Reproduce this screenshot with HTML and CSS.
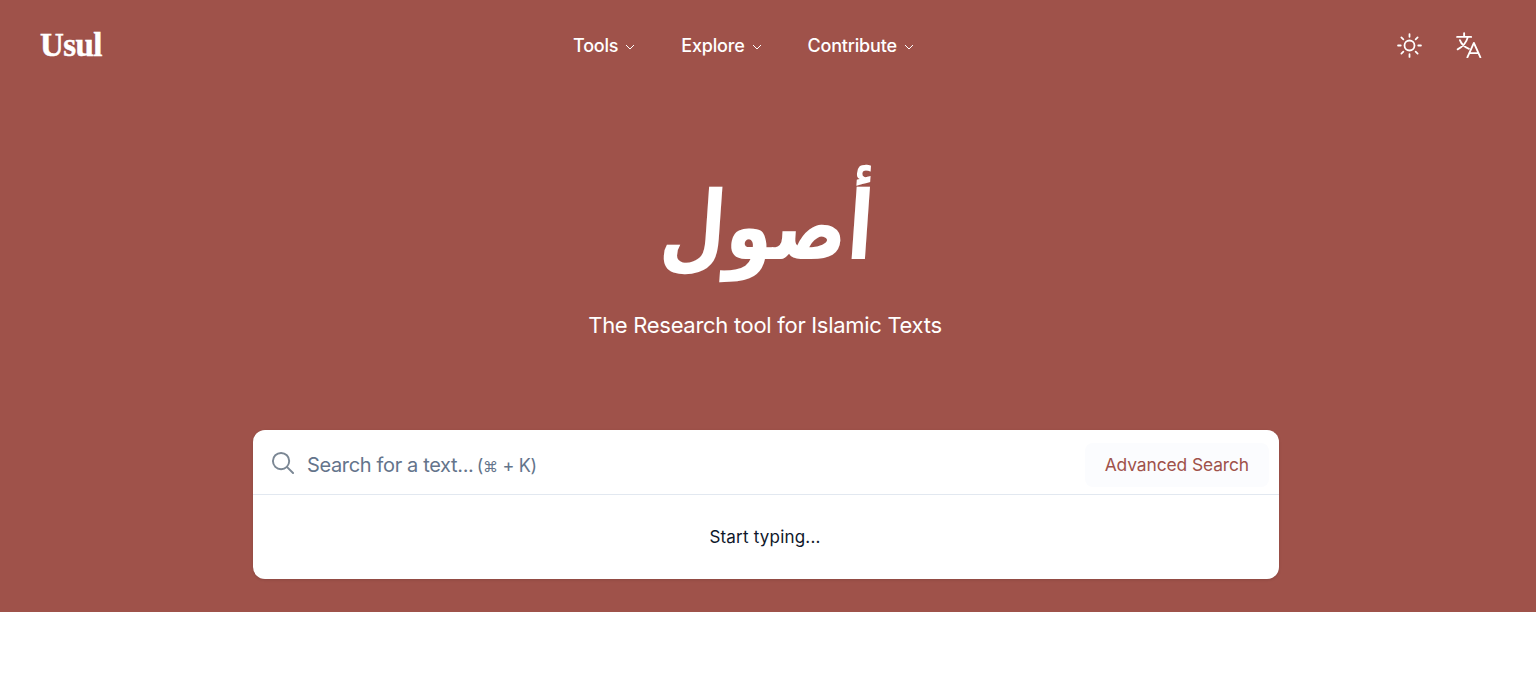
FILE: index.html
```html
<!DOCTYPE html>
<html lang="en">
<head>
  <meta charset="UTF-8" />
  <title>Usul</title>
  <meta name="viewport" content="width=device-width, initial-scale=1.0" />
  <link rel="stylesheet" href="styles.css">
</head>
<body>
  <section class="hero">
    <header class="topbar">
      <a class="logo">Usul</a>
      <nav class="menu">
        <a class="menu-item">Tools
          <svg class="chevron" viewBox="0 0 10 6"><path d="M1 1l4 4 4-4"/></svg>
        </a>
        <a class="menu-item">Explore
          <svg class="chevron" viewBox="0 0 10 6"><path d="M1 1l4 4 4-4"/></svg>
        </a>
        <a class="menu-item">Contribute
          <svg class="chevron" viewBox="0 0 10 6"><path d="M1 1l4 4 4-4"/></svg>
        </a>
      </nav>
      <div class="actions">
        <svg class="icon" viewBox="0 0 24 24">
          <circle cx="12" cy="12" r="4.8"/>
          <path d="M12 1v2.6M12 20.400V23M1 12h2.600M20.400 12H23M4.200 4.200l1.900 1.900M17.900 17.900l1.900 1.900M4.200 19.800l1.900-1.900M17.900 6.100l1.900-1.900"/>
        </svg>
        <svg class="icon icon-lang" viewBox="0 0 24 24">
          <path d="M1 4.500h13M7.500 1v3.500M11 4.500c-1.300 5-4.600 9-9.500 11.500M3.600 7.500c1.400 3.600 4.200 6.400 8.400 8"/>
          <path d="M10.500 23.500l6-13.500 6 13.500M12.400 19.500h8.200"/>
        </svg>
      </div>
    </header>

    <div class="title-block">
      <h1 class="title" lang="ar" dir="rtl">أصول</h1>
      <p class="tagline">The Research tool for Islamic Texts</p>
    </div>

    <div class="search-card">
      <div class="search-row">
        <svg class="search-icon" viewBox="0 0 24 24"><circle cx="10.500" cy="10.500" r="8.500"/><path d="M16.800 16.800L23 23"/></svg>
        <span class="search-text">Search for a text... <span class="search-hint">(<span class="cmd">⌘</span> + K)</span></span>
        <a class="advanced">Advanced Search</a>
      </div>
      <div class="search-empty">Start typing...</div>
    </div>
  </section>
</body>
</html>
```

FILE: styles.css
```css
* {
  box-sizing: border-box;
}

body {
  margin: 0;
  background: #fff;
  font-family: Inter, "Noto Sans", sans-serif;
  color: #0f172a;
}

.hero {
  height: 612px;
  background: #9f524a;
  display: flex;
  flex-direction: column;
}

.topbar {
  height: 90px;
  padding: 0 54px 0 40px;
  display: flex;
  justify-content: space-between;
  align-items: center;
}

.logo {
  font-family: "Liberation Serif", serif;
  font-weight: 700;
  font-size: 33px;
  letter-spacing: -0.6px;
  -webkit-text-stroke: 0.5px #fff;
  color: #fff;
}

.menu {
  display: flex;
  gap: 46px;
  margin-left: -12px;
}

.menu-item {
  display: flex;
  align-items: center;
  gap: 7px;
  font-size: 18px;
  font-weight: 500;
  letter-spacing: -0.2px;
  color: #fff;
}

.chevron {
  width: 10px;
  height: 6px;
  margin-top: 3px;
  fill: none;
  stroke: #fff;
  stroke-width: 1;
}

.actions {
  display: flex;
  justify-content: flex-end;
  align-items: center;
  gap: 34px;
}

.icon {
  width: 25px;
  height: 25px;
  fill: none;
  stroke: #fff;
  stroke-width: 1.7;
  stroke-linecap: round;
  stroke-linejoin: round;
}

.icon-lang {
  width: 26px;
  height: 26px;
}

.title-block {
  text-align: center;
  padding: 71px 6px 0 0;
  color: #fff;
}

.title {
  margin: 0;
  font-family: "DejaVu Sans", sans-serif;
  font-size: 95px;
  font-weight: 700;
  line-height: 130px;
  color: #fff;
  transform: translateX(2px) scaleX(0.8) skewX(-5deg);
}

.tagline {
  margin: 19px 0 0;
  font-size: 22px;
  line-height: 30px;
  letter-spacing: -0.3px;
}

.search-card {
  width: 1026px;
  margin: 90px 0 0 253px;
  background: #fff;
  border-radius: 12px;
  box-shadow: 0 1px 3px rgba(0, 0, 0, 0.12);
  overflow: hidden;
}

.search-row {
  height: 65px;
  display: flex;
  align-items: center;
  padding: 5px 10px 0 18px;
  border-bottom: 1px solid #e2e8f0;
}

.search-icon {
  width: 23px;
  height: 23px;
  flex: none;
  margin-bottom: 4px;
  fill: none;
  stroke: #7b8794;
  stroke-width: 2;
  stroke-linecap: round;
}

.search-text {
  flex: 1;
  margin-left: 13px;
  font-size: 20px;
  letter-spacing: -0.35px;
  color: #64748b;
}

.search-hint {
  margin-left: -2px;
  font-size: 18px;
}

.cmd {
  font-size: 15px;
}

.advanced {
  height: 44px;
  display: flex;
  align-items: center;
  padding: 0 20px;
  border-radius: 8px;
  background: #fbfcfe;
  font-size: 17.4px;
  letter-spacing: -0.1px;
  color: #9f524a;
}

.search-empty {
  height: 84px;
  display: flex;
  align-items: center;
  justify-content: center;
  font-size: 17px;
  letter-spacing: 0.2px;
  padding-right: 2px;
}
```
